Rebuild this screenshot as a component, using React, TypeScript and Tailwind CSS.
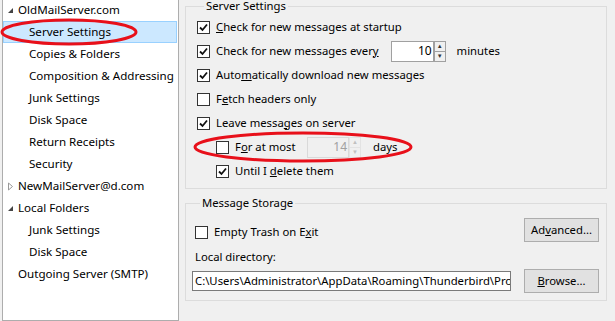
import React from 'react'

const font = { fontFamily: '"Noto Sans", "Segoe UI", sans-serif' }

function Check({ checked }: { checked?: boolean }) {
  return (
    <span className="flex h-[13px] w-[13px] shrink-0 items-center justify-center border border-[#333] bg-white">
      {checked && (
        <svg width="9" height="9" viewBox="0 0 9 9">
          <path d="M1 4.5 L3.5 7 L8 1.5" fill="none" stroke="#111" strokeWidth="1.8" />
        </svg>
      )}
    </span>
  )
}

function Row({ checked, children, className = '' }: { checked?: boolean; children: React.ReactNode; className?: string }) {
  return (
    <div className={`flex h-[24px] items-center gap-[6px] whitespace-nowrap ${className}`}>
      <Check checked={checked} />
      <span>{children}</span>
    </div>
  )
}

function Spin({ value, disabled, w }: { value: string; disabled?: boolean; w: string }) {
  return (
    <div className="flex items-center">
      <div
        className={`flex h-[21px] ${w} items-center justify-end border pr-[1px] text-[12px] ${
          disabled ? 'border-[#d9d9d9] bg-[#f0f0f0] text-[#a0a0a0]' : 'border-[#a0a0a0] bg-white'
        }`}
      >
        {value}
      </div>
      <div className={`flex h-[21px] w-[12px] flex-col border ${disabled ? 'border-[#e3e3e3]' : 'border-[#a0a0a0]'}`}>
        <span className={`flex flex-1 items-center justify-center text-[6px] leading-none ${disabled ? 'text-[#c0c0c0]' : 'text-[#333]'}`}>▲</span>
        <span className={`flex flex-1 items-center justify-center border-t text-[6px] leading-none ${disabled ? 'border-[#e3e3e3] text-[#c0c0c0]' : 'border-[#a0a0a0] text-[#333]'}`}>▼</span>
      </div>
    </div>
  )
}

function Tri({ open }: { open: boolean }) {
  return open ? (
    <svg width="7" height="7" viewBox="0 0 7 7" className="shrink-0">
      <path d="M6 1 L6 6 L1 6 Z" fill="#444" />
    </svg>
  ) : (
    <svg width="7" height="9" viewBox="0 0 7 9" className="shrink-0">
      <path d="M1.5 1 L5.5 4.5 L1.5 8 Z" fill="none" stroke="#999" />
    </svg>
  )
}

const tree: { label: string; level: number; open?: boolean; sel?: boolean }[] = [
  { label: 'OldMailServer.com', level: 0, open: true },
  { label: 'Server Settings', level: 1, sel: true },
  { label: 'Copies & Folders', level: 1 },
  { label: 'Composition & Addressing', level: 1 },
  { label: 'Junk Settings', level: 1 },
  { label: 'Disk Space', level: 1 },
  { label: 'Return Receipts', level: 1 },
  { label: 'Security', level: 1 },
  { label: 'NewMailServer@d.com', level: 0, open: false },
  { label: 'Local Folders', level: 0, open: true },
  { label: 'Junk Settings', level: 1 },
  { label: 'Disk Space', level: 1 },
  { label: 'Outgoing Server (SMTP)', level: 0 },
]

export default function App() {
  return (
    <div className="relative flex h-[321px] w-[615px] overflow-hidden bg-[#f0f0f0] text-[11.3px] text-black" style={font}>
      <div className="ml-[2px] mt-[-2px] w-[177px] shrink-0 border border-[#adadad] bg-white pr-[1px] text-[11.6px]">
        {tree.map((t, i) => (
          <div
            key={i}
            className={`flex h-[22px] items-center whitespace-nowrap ${
              t.sel ? 'border border-[#99d1ff] bg-[#cce8ff]' : 'border border-transparent'
            } ${t.level === 1 ? 'pl-[25px]' : 'pl-[1px]'}`}
          >
            {t.level === 0 && (
              <span className="flex w-[11px] items-center justify-center">{t.open !== undefined && <Tri open={t.open} />}</span>
            )}
            <span className={t.level === 0 ? 'pl-[2px]' : ''}>{t.label}</span>
          </div>
        ))}
      </div>

      <div className="flex flex-1 flex-col pl-[6px] pr-[8px]">
        <fieldset className="h-[189px] border border-[#dcdcdc] pl-[11px]">
          <legend className="ml-[7px] px-[2px] leading-[12px]">Server Settings</legend>
          <div className="mt-[3px]">
            <Row checked>
              <u>C</u>heck for new messages at startup
            </Row>
            <div className="flex h-[24px] items-center">
              <Row checked>
                Check for new messages ever<u>y</u>
              </Row>
              <div className="ml-[12px]">
                <Spin value="10" w="w-[43px]" />
              </div>
              <span className="ml-[11px]">minutes</span>
            </div>
            <Row checked>
              Auto<u>m</u>atically download new messages
            </Row>
            <Row>
              F<u>e</u>tch headers only
            </Row>
            <Row checked>
              Leave messa<u>g</u>es on server
            </Row>
            <div className="flex h-[24px] items-center pl-[19px]">
              <Row className="w-[91px]">
                F<u>o</u>r at most
              </Row>
              <Spin value="14" disabled w="w-[42px]" />
              <span className="ml-[12px]">days</span>
            </div>
            <Row checked className="pl-[19px]">
              Until I <u>d</u>elete them
            </Row>
          </div>
        </fieldset>

        <fieldset className="mt-[8px] h-[104px] border border-[#dcdcdc] pl-[9px] pr-[7px]">
          <legend className="ml-[5px] px-[2px] leading-[12px]">Message Storage</legend>
          <div className="mt-[9px] flex items-center justify-between">
            <Row>
              Empty Trash on E<u>x</u>it
            </Row>
            <button className="mb-[5px] h-[24px] w-[75px] whitespace-nowrap border border-[#adadad] bg-[#e1e1e1]">
              Ad<u>v</u>anced...
            </button>
          </div>
          <div className="mt-[2px] leading-[16px]">Local directory:</div>
          <div className="mt-[4px] flex items-center justify-between">
            <div className="ml-[-3px] flex h-[20px] w-[319px] items-center overflow-hidden whitespace-nowrap border border-[#7a7a7a] bg-white pl-[2px]">
              C:\Users\Administrator\AppData\Roaming\Thunderbird\Profiles
            </div>
            <button className="h-[24px] w-[75px] whitespace-nowrap border border-[#adadad] bg-[#e1e1e1]">
              <u>B</u>rowse...
            </button>
          </div>
        </fieldset>
      </div>

      <svg className="pointer-events-none absolute left-0 top-0" width="615" height="321">
        <ellipse cx="69" cy="32" rx="67" ry="12" fill="none" stroke="#e8101a" strokeWidth="3" />
        <ellipse cx="303" cy="147" rx="108" ry="14" fill="none" stroke="#e8101a" strokeWidth="3" />
      </svg>
    </div>
  )
}
